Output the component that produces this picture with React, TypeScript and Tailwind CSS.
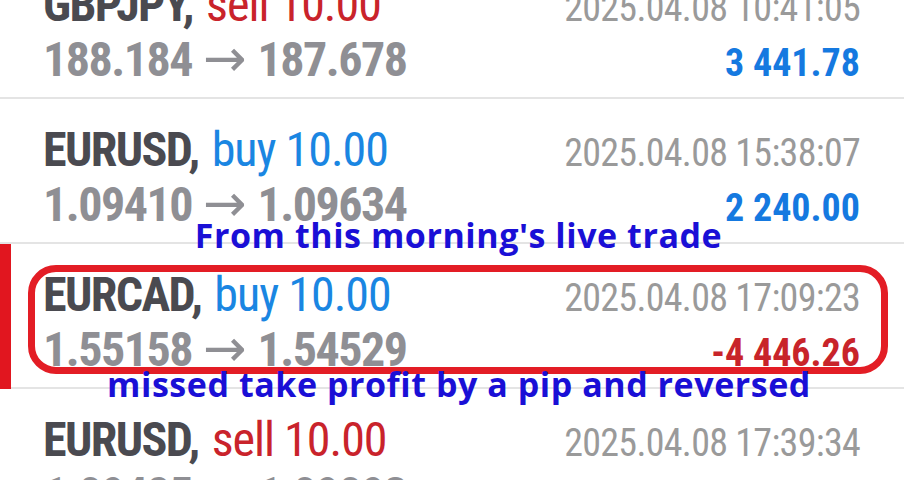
type Trade = {
  symbol: string;
  side: "buy" | "sell";
  volume: string;
  open: string;
  close: string;
  time: string;
  profit: string;
};

const trades: Trade[] = [
  { symbol: "GBPJPY", side: "sell", volume: "10.00", open: "188.184", close: "187.678", time: "2025.04.08 10:41:05", profit: "3 441.78" },
  { symbol: "EURUSD", side: "buy", volume: "10.00", open: "1.09410", close: "1.09634", time: "2025.04.08 15:38:07", profit: "2 240.00" },
  { symbol: "EURCAD", side: "buy", volume: "10.00", open: "1.55158", close: "1.54529", time: "2025.04.08 17:09:23", profit: "-4 446.26" },
  { symbol: "EURUSD", side: "sell", volume: "10.00", open: "1.09425", close: "1.09093", time: "2025.04.08 17:39:34", profit: "3 320.00" },
];

const TradeRow = ({ trade, selected }: { trade: Trade; selected?: boolean }) => {
  const loss = trade.profit.startsWith("-");
  return (
    <div className="relative h-[145px] shrink-0 border-b-2 border-[#e4e4e4] pl-[43px] pr-[44px] pt-[26px]">
      {selected && <div className="absolute left-0 top-0 h-[145px] w-[11px] bg-[#e1161f]" />}
      <div className="flex items-baseline justify-between leading-[50px]">
        <div className="flex items-baseline gap-[13px] text-[48px] whitespace-nowrap">
          <span className="font-bold tracking-[-1.6px] text-[#4a4a50]">{trade.symbol},</span>
          <span className={`tracking-[-1px] ${trade.side === "buy" ? "text-[#1a86e2]" : "text-[#c9232b]"}`}>
            {trade.side} {trade.volume}
          </span>
        </div>
        <div className="text-[38px] tracking-[-0.7px] text-[#9a9a9a] whitespace-nowrap">{trade.time}</div>
      </div>
      <div className="flex items-baseline justify-between leading-[50px]">
        <div className="flex items-baseline gap-[11px] text-[48px] font-bold text-[#8f8f94] whitespace-nowrap">
          <span className="tracking-[-1.5px]">{trade.open}</span>
          <span className="text-[52px] font-normal" style={{ fontFamily: '"DejaVu Sans", sans-serif' }}>→</span>
          <span className="tracking-[-1.5px]">{trade.close}</span>
        </div>
        <div className={`text-[38px] font-bold whitespace-nowrap ${loss ? "text-[#c8242a]" : "text-[#1579e0]"}`}>
          {trade.profit}
        </div>
      </div>
    </div>
  );
};

export default function App() {
  return (
    <div
      className="relative h-[480px] w-[904px] overflow-hidden bg-white"
      style={{ fontFamily: '"Roboto Condensed", Roboto, sans-serif' }}
    >
      <div className="mt-[-46px] flex flex-col">
        {trades.map((t, i) => (
          <TradeRow key={i} trade={t} selected={i === 2} />
        ))}
      </div>

      {/* annotation overlay */}
      <div className="absolute left-[28px] top-[265px] h-[109px] w-[860px] rounded-[28px] border-[7px] border-[#e31d25]" />
      <div
        className="absolute left-0 top-[215px] w-[904px] pl-[13px] text-center text-[34px] font-bold leading-[40px] tracking-[0.55px] text-[#1a0fd6] whitespace-nowrap"
        style={{ fontFamily: '"Open Sans", "Noto Sans", sans-serif' }}
      >
        From this morning's live trade
      </div>
      <div
        className="absolute left-0 top-[364px] w-[904px] pl-[14px] text-center text-[34px] font-bold leading-[40px] tracking-[0.55px] text-[#1a0fd6] whitespace-nowrap"
        style={{ fontFamily: '"Open Sans", "Noto Sans", sans-serif' }}
      >
        missed take profit by a pip and reversed
      </div>
    </div>
  );
}
